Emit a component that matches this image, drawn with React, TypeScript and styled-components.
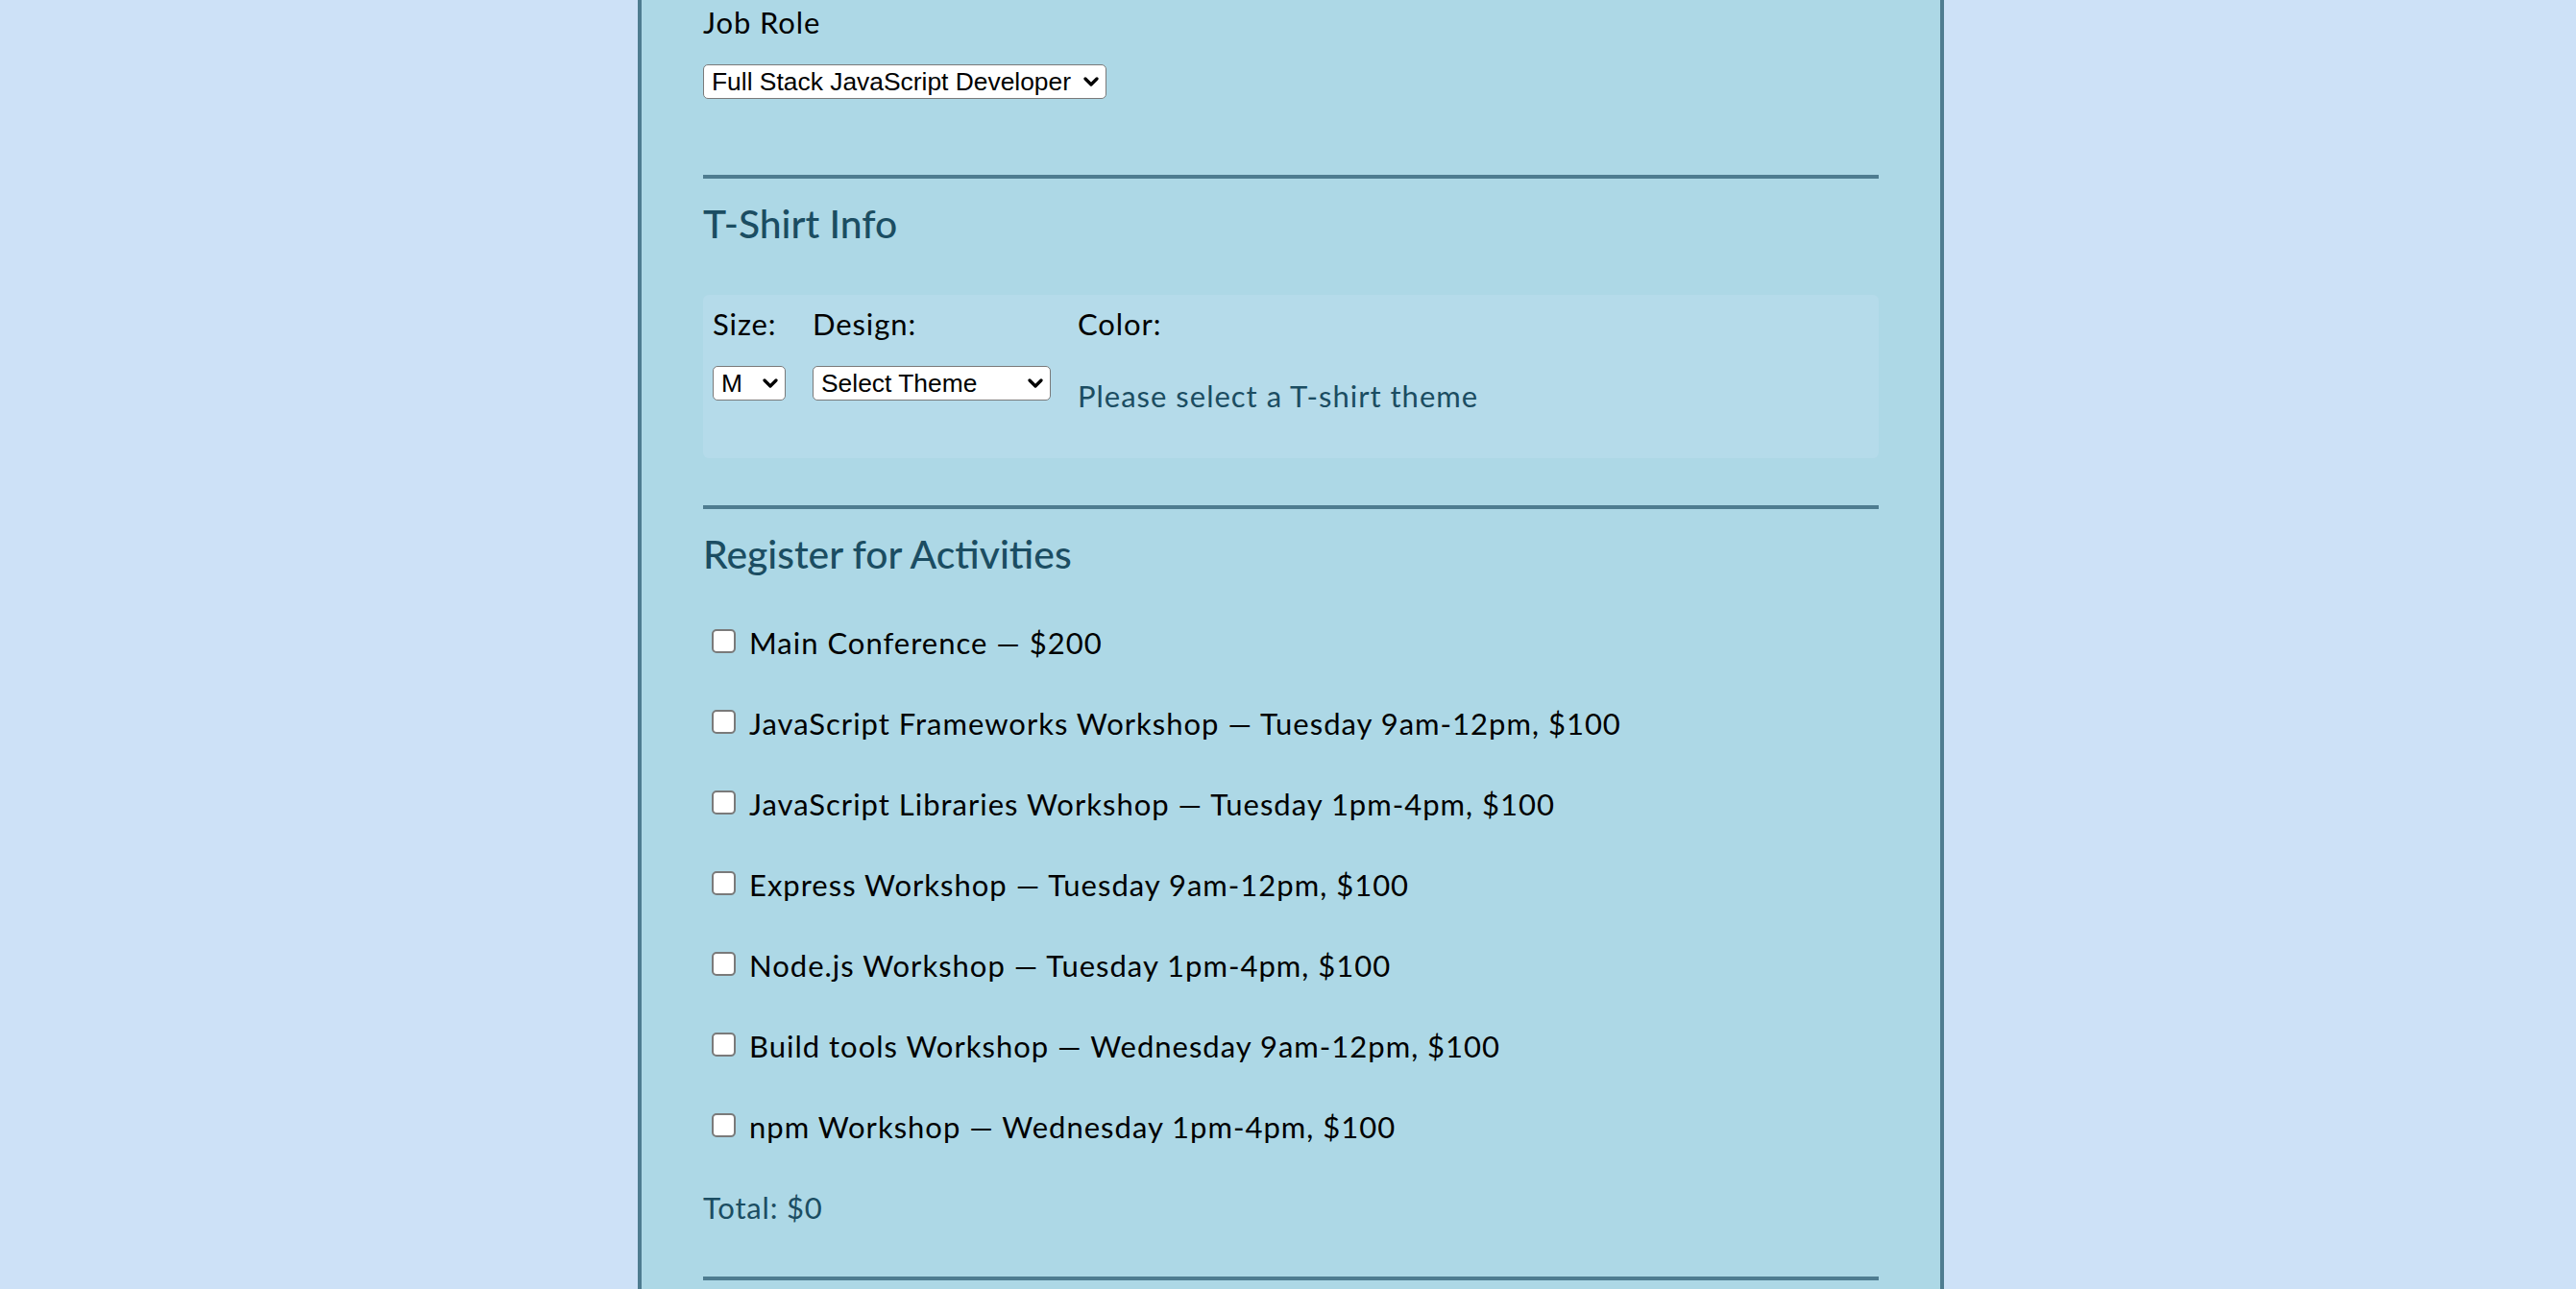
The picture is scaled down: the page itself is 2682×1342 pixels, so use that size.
import React from "react";
import styled, { createGlobalStyle } from "styled-components";

const GlobalStyle = createGlobalStyle`
  html, body {
    margin: 0;
    padding: 0;
    background: #cde1f7;
  }
  body {
    font-family: "Lato", "Noto Sans", sans-serif;
    color: #000;
  }
`;

const Page = styled.div`
  display: flex;
  justify-content: center;
  padding-left: 6px;
  height: 1342px;
  overflow: hidden;
  box-sizing: border-box;
`;

const Form = styled.form`
  display: block;
  width: 1360px;
  height: 1342px;
  flex-shrink: 0;
  box-sizing: border-box;
  background: #add8e6;
  border-left: 4px solid #4e7c90;
  border-right: 4px solid #4e7c90;
  padding: 5px 64px 0;
`;

const FieldLabel = styled.label`
  display: block;
  font-size: 31px;
  letter-spacing: 0.9px;
  line-height: 37px;
  margin-bottom: 25px;
  white-space: nowrap;
`;

const SelectWrap = styled.div<{ $width: number }>`
  position: relative;
  width: ${(p) => p.$width}px;
  height: 36px;
`;

const Select = styled.select`
  appearance: none;
  -webkit-appearance: none;
  display: block;
  width: 100%;
  height: 100%;
  box-sizing: border-box;
  border: 1.5px solid #7a7a7a;
  border-radius: 5px;
  background: #fff;
  color: #000;
  font-family: "Liberation Sans", Arial, sans-serif;
  font-size: 26.4px;
  padding: 0 30px 0 8px;
  margin: 0;
  outline: none;
`;

const Chevron = styled.svg`
  position: absolute;
  right: 8px;
  top: 50%;
  width: 16px;
  height: 11px;
  margin-top: -5px;
  pointer-events: none;
`;

const Divider = styled.hr<{ $space: number }>`
  display: block;
  border: none;
  height: 4px;
  background: #4e7c90;
  margin: ${(p) => p.$space}px 0 22px;
`;

const SectionTitle = styled.h2`
  margin: 0 0 50px;
  font-size: 40.8px;
  line-height: 49px;
  font-weight: 500;
  color: #1b4d62;
`;

const ShirtBox = styled.div`
  background: #b5dbea;
  border-radius: 6px;
  height: 170px;
  box-sizing: border-box;
  padding: 11.5px 10px 0;
  display: flex;
  gap: 28px;
`;

const ShirtColumn = styled.div<{ $width?: number }>`
  display: flex;
  flex-direction: column;
  flex-shrink: 0;
  width: ${(p) => (p.$width ? `${p.$width}px` : "auto")};
`;

const ThemeHint = styled.p`
  margin: 13.5px 0 0;
  font-size: 31px;
  letter-spacing: 1px;
  line-height: 37px;
  color: #1b4d62;
  white-space: nowrap;
`;

const ActivityList = styled.div`
  display: flex;
  flex-direction: column;
  gap: 47px;
`;

const ActivityRow = styled.label`
  display: flex;
  align-items: flex-start;
  gap: 14px;
  padding-left: 9px;
  font-size: 31px;
  letter-spacing: 1px;
  line-height: 37px;
  white-space: nowrap;
`;

const Checkbox = styled.input.attrs({ type: "checkbox" })`
  appearance: none;
  -webkit-appearance: none;
  width: 25px;
  height: 25px;
  margin: 4px 0 0;
  box-sizing: border-box;
  border: 2px solid #7a7a7a;
  border-radius: 5px;
  background: #fff;
  flex-shrink: 0;
`;

const Total = styled.p`
  margin: 47px 0 0;
  font-size: 31px;
  letter-spacing: 0.8px;
  line-height: 37px;
  color: #1b4d62;
`;

const ChevronIcon = () => (
  <Chevron viewBox="0 0 16 11" aria-hidden="true">
    <polyline
      points="2,2 8,8 14,2"
      fill="none"
      stroke="#000"
      strokeWidth="3.2"
      strokeLinecap="round"
      strokeLinejoin="round"
    />
  </Chevron>
);

const activities = [
  "Main Conference — $200",
  "JavaScript Frameworks Workshop — Tuesday 9am-12pm, $100",
  "JavaScript Libraries Workshop — Tuesday 1pm-4pm, $100",
  "Express Workshop — Tuesday 9am-12pm, $100",
  "Node.js Workshop — Tuesday 1pm-4pm, $100",
  "Build tools Workshop — Wednesday 9am-12pm, $100",
  "npm Workshop — Wednesday 1pm-4pm, $100",
];

export default function App() {
  return (
    <>
      <GlobalStyle />
      <Page>
        <Form onSubmit={(e) => e.preventDefault()}>
          <FieldLabel htmlFor="title">Job Role</FieldLabel>
          <SelectWrap $width={420}>
            <Select id="title" defaultValue="full-stack">
              <option value="full-stack">Full Stack JavaScript Developer</option>
              <option value="front-end">Front End Developer</option>
              <option value="back-end">Back End Developer</option>
              <option value="other">Other</option>
            </Select>
            <ChevronIcon />
          </SelectWrap>

          <Divider $space={79} />
          <SectionTitle>T-Shirt Info</SectionTitle>
          <ShirtBox>
            <ShirtColumn $width={76}>
              <FieldLabel htmlFor="size">Size:</FieldLabel>
              <SelectWrap $width={76}>
                <Select id="size" defaultValue="M">
                  <option value="S">S</option>
                  <option value="M">M</option>
                  <option value="L">L</option>
                  <option value="XL">XL</option>
                </Select>
                <ChevronIcon />
              </SelectWrap>
            </ShirtColumn>
            <ShirtColumn $width={248}>
              <FieldLabel htmlFor="design">Design:</FieldLabel>
              <SelectWrap $width={248}>
                <Select id="design" defaultValue="">
                  <option value="">Select Theme</option>
                  <option value="js-puns">Theme - JS Puns</option>
                  <option value="heart-js">Theme - I ♥ JS</option>
                </Select>
                <ChevronIcon />
              </SelectWrap>
            </ShirtColumn>
            <ShirtColumn>
              <FieldLabel>Color:</FieldLabel>
              <ThemeHint>Please select a T-shirt theme</ThemeHint>
            </ShirtColumn>
          </ShirtBox>

          <Divider $space={49} />
          <SectionTitle>Register for Activities</SectionTitle>
          <ActivityList>
            {activities.map((a) => (
              <ActivityRow key={a}>
                <Checkbox />
                <span>{a}</span>
              </ActivityRow>
            ))}
          </ActivityList>
          <Total>Total: $0</Total>
          <Divider $space={53} />
        </Form>
      </Page>
    </>
  );
}
